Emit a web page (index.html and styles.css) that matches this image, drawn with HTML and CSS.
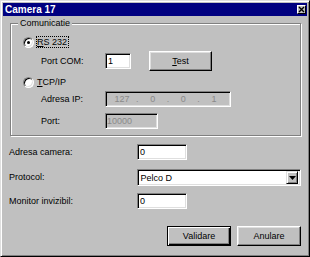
FILE: index.html
```html
<!DOCTYPE html>
<html lang="ro">
<head>
    <meta charset="UTF-8">
    <title>Camera 17</title>
    <link rel="stylesheet" href="styles.css">
</head>
<body>
    <div class="window">
        <div class="titlebar">
            <span class="title">Camera 17</span>
            <span class="close">
                <svg width="7" height="7" viewBox="0 0 7 7"><path d="M1 1L6 6M6 1L1 6" stroke="#000" stroke-width="1.4"/></svg>
            </span>
        </div>
        <div class="content">
            <fieldset class="group">
                <legend>Comunicatie</legend>
                <div class="group-body">
                    <div class="row radio-row">
                        <span class="radio checked"></span>
                        <span class="focus"><u>R</u>S 232</span>
                    </div>
                    <div class="row com-row">
                        <span class="sub-label">Port COM:</span>
                        <span class="field com-field">1</span>
                        <button class="btn test-btn"><u>T</u>est</button>
                    </div>
                    <div class="row radio-row tcp-row">
                        <span class="radio"></span>
                        <span class="radio-label"><u>T</u>CP/IP</span>
                    </div>
                    <div class="row ip-row">
                        <span class="sub-label">Adresa IP:</span>
                        <span class="field disabled ip-field">
                            <span>127</span><span>.</span><span>0</span><span>.</span><span>0</span><span>.</span><span>1</span>
                        </span>
                    </div>
                    <div class="row port-row">
                        <span class="sub-label">Port:</span>
                        <span class="field disabled port-field">10000</span>
                    </div>
                </div>
            </fieldset>

            <div class="form-row camera-row">
                <span class="form-label">Adresa camera:</span>
                <span class="field small-field">0</span>
            </div>
            <div class="form-row protocol-row">
                <span class="form-label">Protocol:</span>
                <span class="field select">
                    <span>Pelco D</span>
                    <span class="select-btn">
                        <svg width="7" height="4" viewBox="0 0 7 4"><path d="M0 0H7L3.5 4Z" fill="#000"/></svg>
                    </span>
                </span>
            </div>
            <div class="form-row monitor-row">
                <span class="form-label">Monitor invizibil:</span>
                <span class="field small-field">0</span>
            </div>

            <div class="actions">
                <button class="btn default">Validare</button>
                <button class="btn">Anulare</button>
            </div>
        </div>
    </div>
</body>
</html>
```

FILE: styles.css
```css
* {
    box-sizing: border-box;
}

body {
    margin: 0;
    background-color: #c0c0c0;
    font: 9px/11px "Liberation Sans", Arial, sans-serif;
    color: #000;
}

.window {
    width: 310px;
    height: 257px;
    padding: 2px;
    background-color: #c0c0c0;
    border: 1px solid;
    border-color: #dfdfdf #000 #000 #dfdfdf;
    box-shadow: inset 1px 1px #fff, inset -1px -1px #808080;
}

.titlebar {
    height: 13px;
    padding: 0 1px 0 2px;
    background-color: #000080;
    color: #fff;
    display: flex;
    align-items: center;
    justify-content: space-between;
}

.title {
    font: bold 10px/13px "Liberation Sans", Arial, sans-serif;
}

.close {
    width: 9px;
    height: 9px;
    background-color: #c0c0c0;
    border: 1px solid;
    border-color: #fff #000 #000 #fff;
    display: flex;
    align-items: center;
    justify-content: center;
}

.close svg {
    display: block;
}

.content {
    padding: 2px 6px 0 7px;
}

/* group box with etched frame */
.group {
    margin: 0;
    padding: 0 0 6px;
    min-width: 0;
    border: 1px solid #808080;
    box-shadow: inset 1px 1px #fff, 1px 1px #fff;
}

.group legend {
    margin-left: 7px;
    padding: 0 2px;
    line-height: 11px;
    background-color: #c0c0c0;
}

.group-body {
    padding-left: 12px;
}

.row {
    display: flex;
    align-items: center;
}

.radio-row {
    height: 14px;
    margin-top: 6px;
}

.com-row {
    height: 20px;
    margin-top: 2px;
}

.tcp-row {
    margin-top: 4px;
}

.ip-row {
    height: 16px;
    margin-top: 2px;
}

.port-row {
    height: 16px;
    margin-top: 6px;
}

.radio {
    width: 11px;
    height: 11px;
    margin-right: 2px;
    border-radius: 50%;
    background-color: #fff;
    border: 1px solid;
    border-color: #808080 #fff #fff #808080;
    box-shadow: inset 1px 1px #000, inset -1px -1px #dfdfdf;
    display: flex;
    align-items: center;
    justify-content: center;
}

.radio.checked::after {
    content: "";
    width: 3px;
    height: 3px;
    border-radius: 50%;
    background-color: #000;
}

.focus {
    padding: 0 1px 0 0;
    line-height: 10px;
    border: 1px dotted #000;
}

.radio-label {
    padding-left: 1px;
}

.sub-label {
    width: 82px;
    padding-left: 18px;
}

/* sunken edit box */
.field {
    height: 16px;
    padding: 0 2px;
    line-height: 14px;
    background-color: #fff;
    border: 1px solid;
    border-color: #808080 #fff #fff #808080;
    box-shadow: inset 1px 1px #000, inset -1px -1px #dfdfdf;
}

.field.disabled {
    background-color: #c0c0c0;
    color: #8a8a8a;
}

.com-field {
    width: 26px;
}

.ip-field {
    width: 126px;
    display: grid;
    grid-template-columns: 1fr auto 1fr auto 1fr auto 1fr;
    text-align: center;
}

.port-field {
    width: 53px;
    padding-left: 1px;
}

/* raised push button */
.btn {
    height: 20px;
    padding: 0;
    font: inherit;
    color: #000;
    background-color: #c0c0c0;
    border: 1px solid;
    border-color: #fff #000 #000 #fff;
    box-shadow: inset -1px -1px #808080, inset 1px 1px #dfdfdf;
}

.btn.default {
    border-color: #000;
    box-shadow: inset 1px 1px #fff, inset -1px -1px #000, inset -2px -2px #808080;
}

.test-btn {
    width: 63px;
    margin-left: 18px;
}

.form-row {
    display: flex;
    align-items: center;
    margin-left: -1px;
}

.form-label {
    width: 128px;
}

.small-field {
    width: 50px;
}

.camera-row {
    margin-top: 8px;
}

.protocol-row {
    margin-top: 9px;
}

.monitor-row {
    margin-top: 7px;
}

.select {
    width: 165px;
    height: 17px;
    padding: 2px 2px 2px 3px;
    display: flex;
    align-items: center;
    justify-content: space-between;
}

.select-btn {
    width: 12px;
    height: 13px;
    background-color: #c0c0c0;
    border: 1px solid;
    border-color: #dfdfdf #000 #000 #dfdfdf;
    box-shadow: inset 1px 1px #fff, inset -1px -1px #808080;
    display: flex;
    align-items: center;
    justify-content: center;
}

.select-btn svg {
    display: block;
}

.actions {
    margin-top: 17px;
    display: flex;
    justify-content: flex-end;
    gap: 6px;
}

.actions .btn {
    width: 64px;
}
```
